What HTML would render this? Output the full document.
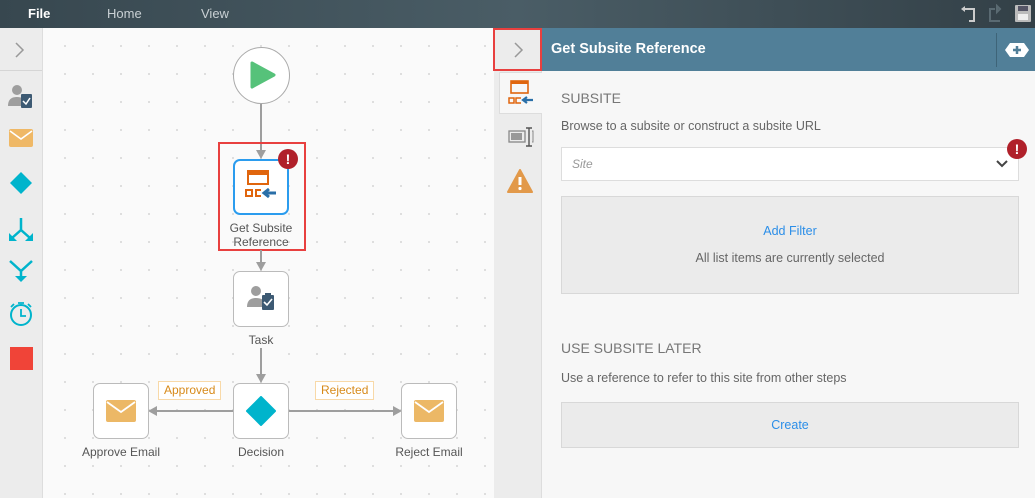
<!DOCTYPE html>
<html><head><meta charset="utf-8"><style>
*{box-sizing:border-box;margin:0;padding:0}
body{width:1035px;height:498px;overflow:hidden;font-family:"Liberation Sans",sans-serif;background:#fafafa;position:relative}
.a{position:absolute}
.top{left:0;top:0;width:1035px;height:28px;background:linear-gradient(90deg,#37474f,#4a5d66 50%,#334047)}
.top span{position:absolute;top:6px;font-size:13px;color:#c9d0d4}
.side{left:0;top:28px;width:43px;height:470px;background:#ececec;border-right:1px solid #ddd}
.canvas{left:43px;top:28px;width:451px;height:470px;background-color:#fafafa;background-image:radial-gradient(circle,#cfcfcf 0.7px,transparent 1.1px);background-size:28px 28px;background-position:8px 4px}
.node{width:56px;height:56px;border:1px solid #bbb;border-radius:7px;background:#fff}
.lbl{font-size:12px;color:#555;text-align:center;width:120px}
.vl{width:2px;background:#9e9e9e}
.hl{height:2px;background:#9e9e9e}
.err{width:20px;height:20px;border-radius:50%;background:#b0202a;color:#fff;font-weight:bold;font-size:14px;text-align:center;line-height:20px}
.tag{border:1px solid #f8d9a8;background:#fff;color:#d78a1a;font-size:12px;height:19px;line-height:17px;padding:0 5px}
.panel{left:494px;top:28px;width:541px;height:470px;background:#f7f7f7}
.gt{font-size:14px;color:#777}
.tx{font-size:12.5px;color:#666}
</style></head><body>
<div class="a top"><span style="left:28px;color:#fff;font-weight:bold">File</span><span style="left:107px">Home</span><span style="left:201px">View</span>
<svg class="a" style="left:960px;top:4px" width="75" height="20"><path d="M4 5h10v12h-5" stroke="#ccc" stroke-width="2" fill="none"/><path d="M1 5l4-3v6z" fill="#ccc"/><path d="M40 17h-10V5h5M40 5l-3-3v6z" stroke="#5a6a72" stroke-width="2" fill="none"/><rect x="55" y="1" width="16" height="17" rx="1" fill="#bbb"/><rect x="58" y="2" width="10" height="5" fill="#556"/><rect x="58" y="10" width="10" height="6" fill="#eee"/></svg></div>
<div class="a side">
<div class="a" style="left:0;top:0;width:42px;height:43px;border-bottom:1px solid #d5d5d5"></div>
<svg class="a" style="left:14px;top:13px" width="12" height="18"><path d="M2 2l7 7-7 7" stroke="#999" stroke-width="1.5" fill="none"/></svg>
<svg class="a" style="left:8px;top:56px" width="26" height="26"><circle cx="9" cy="6" r="5" fill="#9e9e9e"/><path d="M0 22c0-7 4-9 9-9s7 2 7 4v5z" fill="#9e9e9e"/><rect x="13" y="10" width="11" height="14" rx="1" fill="#3d5a73"/><path d="M15 17l3 3 4-6" stroke="#fff" stroke-width="1.5" fill="none"/></svg>
<svg class="a" style="left:9px;top:101px" width="24" height="18"><rect width="24" height="18" rx="2" fill="#efb866"/><path d="M1 2l11 8 11-8" stroke="#fff" stroke-width="1.6" fill="none"/></svg>
<svg class="a" style="left:9px;top:143px" width="24" height="24"><path d="M12 1l11 11-11 11L1 12z" fill="#00b4cc"/></svg>
<svg class="a" style="left:8px;top:189px" width="26" height="26"><path d="M13 1v12M13 13l-9 8M13 13l9 8" stroke="#00b4cc" stroke-width="2.5" fill="none"/><path d="M1 16v8h8zM25 16v8h-8z" fill="#00b4cc"/></svg>
<svg class="a" style="left:8px;top:230px" width="26" height="26"><path d="M2 3l11 10 11-10M13 13v6" stroke="#00b4cc" stroke-width="2.5" fill="none"/><path d="M7 18h12l-6 6z" fill="#00b4cc"/></svg>
<svg class="a" style="left:8px;top:273px" width="26" height="26"><circle cx="13" cy="14" r="10" stroke="#00b4cc" stroke-width="2" fill="none"/><path d="M13 8v7h5M10 2h6M3 6l3-3M23 6l-3-3" stroke="#00b4cc" stroke-width="1.8" fill="none"/></svg>
<div class="a" style="left:10px;top:319px;width:23px;height:23px;background:#f04438"></div>
</div>
<div class="a canvas"></div>
<div class="a" style="left:233px;top:47px;width:57px;height:57px;border:1px solid #aaa;border-radius:50%;background:#fff"></div>
<svg class="a" style="left:248px;top:60px" width="30" height="30"><path d="M4 3l22 12-22 12z" fill="#56c27a" stroke="#56c27a" stroke-width="3" stroke-linejoin="round"/></svg>
<div class="a vl" style="left:260px;top:104px;height:50px"></div><svg class="a" style="left:256px;top:150px" width="10" height="9"><path d="M0 0h10l-5 9z" fill="#9e9e9e"/></svg>
<div class="a" style="left:218px;top:142px;width:88px;height:109px;border:2px solid #e8403f"></div>
<div class="a node" style="left:233px;top:159px;border:2px solid #2b9cee"></div>
<svg class="a" style="left:245px;top:170px" width="34" height="34"><rect x="3" y="1" width="20" height="13" fill="none" stroke="#e0650d" stroke-width="2"/><rect x="3" y="1" width="20" height="4" fill="#e0650d"/><rect x="1" y="20" width="6" height="6" fill="none" stroke="#e0650d" stroke-width="2"/><path d="M16 20h-5v6h5" fill="none" stroke="#e0650d" stroke-width="2"/><path d="M31 23h-10M24 19l-5 4 5 4" stroke="#2a6fa8" stroke-width="3" fill="none"/></svg>
<div class="a err" style="left:278px;top:149px">!</div>
<div class="a lbl" style="left:201px;top:221px;line-height:14px">Get Subsite<br>Reference</div>
<div class="a vl" style="left:260px;top:250px;height:16px"></div><svg class="a" style="left:256px;top:262px" width="10" height="9"><path d="M0 0h10l-5 9z" fill="#9e9e9e"/></svg>
<div class="a node" style="left:233px;top:271px"></div>
<svg class="a" style="left:246px;top:284px" width="30" height="30"><circle cx="10" cy="7" r="5" fill="#9e9e9e"/><path d="M1 23c0-7 4-9 9-9s8 2 8 4v5z" fill="#9e9e9e"/><rect x="16" y="11" width="12" height="15" rx="1" fill="#3d5a73"/><rect x="19" y="9" width="6" height="3" fill="#3d5a73"/><path d="M18 18l3 3 5-6" stroke="#fff" stroke-width="1.6" fill="none"/></svg>
<div class="a lbl" style="left:201px;top:333px">Task</div>
<div class="a vl" style="left:260px;top:348px;height:30px"></div><svg class="a" style="left:256px;top:374px" width="10" height="9"><path d="M0 0h10l-5 9z" fill="#9e9e9e"/></svg>
<div class="a node" style="left:233px;top:383px"></div>
<svg class="a" style="left:245px;top:396px" width="32" height="30"><path d="M16 1l14 14-14 14L2 15z" fill="#00b4cc" stroke="#00b4cc" stroke-linejoin="round" stroke-width="2"/></svg>
<div class="a lbl" style="left:201px;top:445px">Decision</div>
<div class="a hl" style="left:153px;top:410px;width:80px"></div><svg class="a" style="left:148px;top:406px" width="9" height="10"><path d="M0 5l9-5v10z" fill="#9e9e9e"/></svg>
<div class="a hl" style="left:289px;top:410px;width:107px"></div><svg class="a" style="left:393px;top:406px" width="9" height="10"><path d="M9 5L0 0v10z" fill="#9e9e9e"/></svg>
<div class="a tag" style="left:158px;top:381px">Approved</div>
<div class="a tag" style="left:315px;top:381px">Rejected</div>
<div class="a node" style="left:93px;top:383px"></div>
<svg class="a" style="left:106px;top:400px" width="30" height="22"><rect width="30" height="22" rx="2" fill="#ecb866"/><path d="M1 2l14 10 14-10" stroke="#fff" stroke-width="1.8" fill="none"/></svg>
<div class="a lbl" style="left:61px;top:445px">Approve Email</div>
<div class="a node" style="left:401px;top:383px"></div>
<svg class="a" style="left:414px;top:400px" width="30" height="22"><rect width="30" height="22" rx="2" fill="#ecb866"/><path d="M1 2l14 10 14-10" stroke="#fff" stroke-width="1.8" fill="none"/></svg>
<div class="a lbl" style="left:369px;top:445px">Reject Email</div>
<div class="a panel"></div>
<div class="a" style="left:494px;top:28px;width:48px;height:470px;background:#ececec;border-right:1px solid #ddd"></div>
<div class="a" style="left:499px;top:72px;width:43px;height:42px;background:#f7f7f7;border:1px solid #ddd;border-right:none"></div>
<div class="a" style="left:493px;top:28px;width:49px;height:43px;border:2px solid #e8403f;background:#ececec"></div>
<svg class="a" style="left:513px;top:41px" width="12" height="18"><path d="M2 2l7 7-7 7" stroke="#999" stroke-width="1.5" fill="none"/></svg>
<div class="a" style="left:542px;top:28px;width:493px;height:43px;background:#517f98"></div>
<div class="a" style="left:551px;top:41px;font-size:14.5px;color:#fff;font-weight:bold">Get Subsite Reference</div>
<div class="a" style="left:996px;top:33px;width:1px;height:34px;background:#3e6478"></div>
<svg class="a" style="left:1005px;top:43px" width="24" height="14"><path d="M5 0h14l5 7-5 7H5L0 7z" fill="#fff"/><path d="M12 3v8M8 7h8" stroke="#517f98" stroke-width="2.5"/></svg>
<svg class="a" style="left:508px;top:80px" width="26" height="26"><rect x="3" y="1" width="17" height="12" fill="none" stroke="#e0650d" stroke-width="1.6"/><rect x="3" y="1" width="17" height="3" fill="#e0650d"/><rect x="1" y="18" width="5" height="5" fill="none" stroke="#e0650d" stroke-width="1.5"/><path d="M13 18H8v5h5" fill="none" stroke="#e0650d" stroke-width="1.5"/><path d="M25 20h-9M19 17l-4 3 4 3" stroke="#2a6fa8" stroke-width="2.2" fill="none"/></svg>
<svg class="a" style="left:508px;top:127px" width="26" height="20"><rect x="1" y="4" width="16" height="11" fill="none" stroke="#888" stroke-width="1.3"/><rect x="3" y="6" width="11" height="7" fill="#999"/><path d="M21 1v18M18 1h6M18 19h6" stroke="#555" stroke-width="1.4"/><path d="M24 4h1v11h-1" stroke="#888" fill="none"/></svg>
<svg class="a" style="left:507px;top:169px" width="26" height="24"><path d="M13 1L25 23H1z" fill="#e2994a" stroke="#e2994a" stroke-linejoin="round" stroke-width="2"/><path d="M13 8v8" stroke="#fff" stroke-width="3"/><circle cx="13" cy="19.5" r="1.6" fill="#fff"/></svg>
<div class="a gt" style="left:561px;top:90px">SUBSITE</div>
<div class="a tx" style="left:561px;top:119px">Browse to a subsite or construct a subsite URL</div>
<div class="a" style="left:561px;top:147px;width:458px;height:34px;background:#fff;border:1px solid #ddd"></div>
<div class="a" style="left:572px;top:157px;font-size:12px;color:#999;font-style:italic">Site</div>
<svg class="a" style="left:995px;top:159px" width="14" height="10"><path d="M2 2l5 5 5-5" stroke="#444" stroke-width="2" fill="none"/></svg>
<div class="a err" style="left:1007px;top:139px">!</div>
<div class="a" style="left:561px;top:196px;width:458px;height:98px;background:#ebebeb;border:1px solid #d8d8d8"></div>
<div class="a" style="left:561px;top:224px;width:458px;text-align:center;font-size:12.5px;color:#2b8ee8">Add Filter</div>
<div class="a" style="left:561px;top:251px;width:458px;text-align:center;font-size:12.5px;color:#666">All list items are currently selected</div>
<div class="a gt" style="left:561px;top:340px">USE SUBSITE LATER</div>
<div class="a tx" style="left:561px;top:371px">Use a reference to refer to this site from other steps</div>
<div class="a" style="left:561px;top:402px;width:458px;height:46px;background:#ebebeb;border:1px solid #d8d8d8"></div>
<div class="a" style="left:561px;top:418px;width:458px;text-align:center;font-size:12.5px;color:#2b8ee8">Create</div>
</body></html>
